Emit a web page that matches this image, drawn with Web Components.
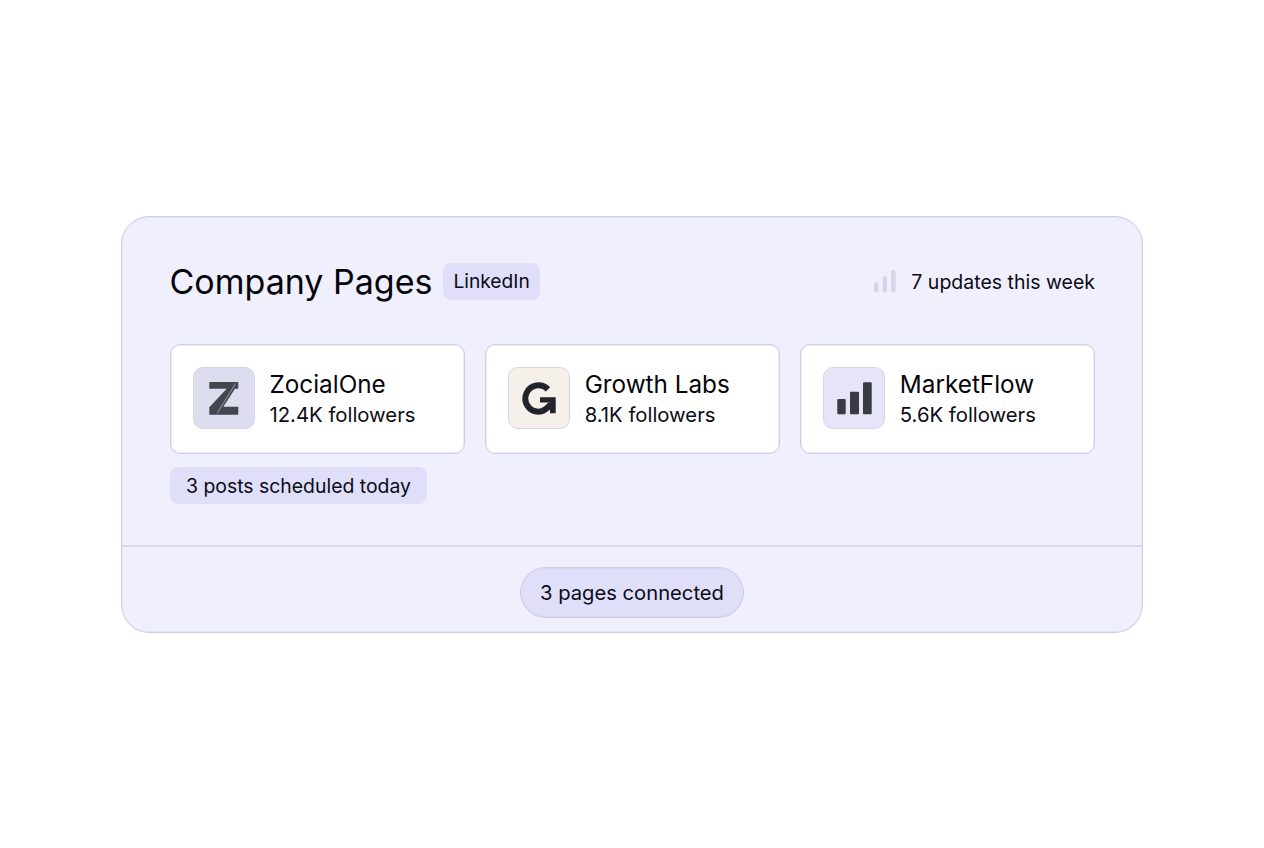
<!DOCTYPE html>
<html>
<head>
<meta charset="utf-8">
<title>Company Pages</title>
<style>
html,body{margin:0;background:#fff;}
body{display:flex;align-items:center;justify-content:center;height:849px;overflow:hidden;font-family:Inter,"Liberation Sans",sans-serif;color:#0b0b14;}
</style>
</head>
<body>
<pages-panel>
    <span slot="title">Company Pages</span>
    <span slot="badge">LinkedIn</span>
    <span slot="stat">7 updates this week</span>
    <page-card name="ZocialOne" followers="12.4K followers" tone="#dcdef0">
        <svg width="48" height="48" viewBox="0 0 48 48"><path d="M9.300 8H38.300V14.700H35L23.300 32.700H38.300V40.700H9.300V33.300L26.700 14.700H9.300Z" fill="#43454f"/><path d="M35.500 9.500L17 39.500" stroke="#dcdef0" stroke-width="0.700" stroke-opacity="0.800"/></svg>
    </page-card>
    <page-card name="Growth Labs" followers="8.1K followers" tone="#f6f0ea">
        <svg width="48" height="48" viewBox="0 0 48 48"><path d="M33 15.300A13.200 13.200 0 1 0 23.500 37.700C28 37.700 31 36 36 30" fill="none" stroke="#22242c" stroke-width="6"/><path d="M25 23.300H40.700V39.300H35V28.500H25Z" fill="#22242c"/></svg>
    </page-card>
    <page-card name="MarketFlow" followers="5.6K followers" tone="#e5e5f7">
        <svg width="48" height="48" viewBox="0 0 48 48" fill="#383a44"><rect x="7.300" y="25" width="8.400" height="15.300" rx="1"/><rect x="20" y="17.700" width="9" height="22.600" rx="1"/><rect x="33" y="8.300" width="8.700" height="32" rx="1"/></svg>
    </page-card>
    <span slot="note">3 posts scheduled today</span>
    <span slot="footer">3 pages connected</span>
</pages-panel>
<script>
const panelTemplate=document.createElement("template");
panelTemplate.innerHTML=`
<style>
:host{
    display:block;
    width:1022px;
    box-sizing:border-box;
    background:#f0effd;
    border:1px solid #d0cee8;
    box-shadow:inset 0 0 0 1px #e6e4f6;
    border-radius:28px;
}
.main{
    padding:47px 47px 41px 47.5px;
}
.head{
    display:flex;
    align-items:center;
    justify-content:space-between;
    height:36px;
    margin-bottom:44px;
}
.left{
    display:flex;
    align-items:center;
    gap:11px;
}
.title{
    font-size:34px;
    line-height:36px;
    color:#05050a;
}
.badge{
    font-size:19.2px;
    line-height:25px;
    padding:6px 10px;
    margin-bottom:1px;
    background:#dfdffa;
    border-radius:8px;
}
.stat{
    display:flex;
    align-items:center;
    gap:15px;
    font-size:19.5px;
}
.cards{
    display:grid;
    grid-template-columns:repeat(3,1fr);
    gap:20px;
}
.note{
    width:fit-content;
    margin-top:13px;
    font-size:19.4px;
    line-height:25px;
    padding:7px 16.5px 5px;
    background:#dfdffa;
    border-radius:8px;
}
.foot{
    border-top:2px solid #d8d6ec;
    height:85px;
    display:flex;
    align-items:flex-start;
    justify-content:center;
}
.pill{
    margin-top:20px;
    font-size:20.2px;
    line-height:25px;
    padding:12px 19px;
    background:#dfdffa;
    border:1px solid #cfcde6;
    box-shadow:inset 0 0 0 1px #d9d8f3;
    border-radius:26px;
}
</style>
<div class="main">
    <div class="head">
        <div class="left">
            <div class="title"><slot name="title"></slot></div>
            <div class="badge"><slot name="badge"></slot></div>
        </div>
        <div class="stat">
            <svg width="22" height="24" viewBox="0 0 22 24" fill="#d5d4ea"><rect x="0" y="12" width="4.400" height="10.500" rx="2"/><rect x="8.600" y="6" width="4.400" height="16.500" rx="2"/><rect x="17" y="0" width="4.600" height="22.500" rx="2"/></svg>
            <slot name="stat"></slot>
        </div>
    </div>
    <div class="cards"><slot></slot></div>
    <div class="note"><slot name="note"></slot></div>
</div>
<div class="foot"><div class="pill"><slot name="footer"></slot></div></div>`;

class PagesPanel extends HTMLElement{
    constructor(){
        super();
        this.attachShadow({mode:'open'});
        this.shadowRoot.appendChild(panelTemplate.content.cloneNode(true));
    }
}

const cardTemplate=document.createElement("template");
cardTemplate.innerHTML=`
<style>
:host{
    display:flex;
    align-items:center;
    gap:14.5px;
    box-sizing:border-box;
    height:110px;
    padding:0 22.5px 2px;
    background:#fff;
    border:1px solid #cfcde8;
    box-shadow:inset 0 0 0 1px #eceafa;
    border-radius:10px;
}
.logo{
    width:62px;
    height:62px;
    box-sizing:border-box;
    flex:none;
    display:flex;
    align-items:center;
    justify-content:center;
    border:1px solid #d5d4ec;
    border-radius:10px;
}
.text{
    margin-top:2px;
}
.name{
    font-size:24.3px;
    line-height:30px;
    color:#05050a;
}
.followers{
    margin-top:2px;
    font-size:20.3px;
    line-height:28px;
}
</style>
<div class="logo"><slot></slot></div>
<div class="text">
    <div class="name"></div>
    <div class="followers"></div>
</div>`;

class PageCard extends HTMLElement{
    constructor(){
        super();
        this.attachShadow({mode:'open'});
        this.shadowRoot.appendChild(cardTemplate.content.cloneNode(true));
        this.shadowRoot.querySelector('.name').textContent=this.getAttribute('name');
        this.shadowRoot.querySelector('.followers').textContent=this.getAttribute('followers');
        this.shadowRoot.querySelector('.logo').style.backgroundColor=this.getAttribute('tone');
    }
}

window.customElements.define("pages-panel",PagesPanel);
window.customElements.define("page-card",PageCard);
</script>
</body>
</html>
